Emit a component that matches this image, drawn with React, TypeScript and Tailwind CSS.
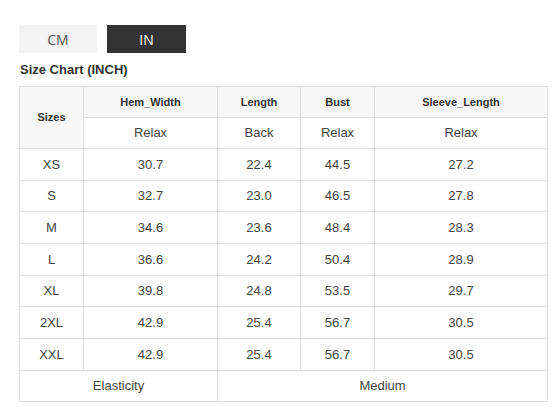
const ROWS = [
  ["XS", "30.7", "22.4", "44.5", "27.2"],
  ["S", "32.7", "23.0", "46.5", "27.8"],
  ["M", "34.6", "23.6", "48.4", "28.3"],
  ["L", "36.6", "24.2", "50.4", "28.9"],
  ["XL", "39.8", "24.8", "53.5", "29.7"],
  ["2XL", "42.9", "25.4", "56.7", "30.5"],
  ["XXL", "42.9", "25.4", "56.7", "30.5"],
];

const cell = "border border-[#dddddd] text-center align-middle p-0";

export default function App() {
  return (
    <div className="w-[555px] h-[418px] bg-white pl-[19px] pt-[25px] font-['Liberation_Sans',Arial,sans-serif]">
      {/* Unit tabs */}
      <div className="flex gap-[10px] font-['Open_Sans',sans-serif] text-[14px]">
        <button className="w-[78px] h-[28px] bg-[#f3f3f3] text-[#555]">CM</button>
        <button className="w-[79px] h-[28px] bg-[#333333] text-white">IN</button>
      </div>

      <h2 className="mt-[9px] mb-[8px] pl-px text-[13px] leading-[16px] font-bold text-[#333]">
        Size Chart (INCH)
      </h2>

      <table className="border-collapse table-fixed w-[529px] text-[#444]">
        <colgroup>
          <col className="w-[64px]" />
          <col className="w-[134px]" />
          <col className="w-[83px]" />
          <col className="w-[74px]" />
          <col className="w-[173px]" />
        </colgroup>
        <tbody>
          <tr className="h-[31px] text-[11px] font-bold text-[#333]">
            <td rowSpan={2} className={`${cell} bg-[#f7f7f7]`}>Sizes</td>
            <td className={`${cell} bg-[#f7f7f7]`}>Hem_Width</td>
            <td className={`${cell} bg-[#f7f7f7]`}>Length</td>
            <td className={`${cell} bg-[#f7f7f7]`}>Bust</td>
            <td className={`${cell} bg-[#f7f7f7]`}>Sleeve_Length</td>
          </tr>
          <tr className="h-[31px] text-[13px]">
            <td className={cell}>Relax</td>
            <td className={cell}>Back</td>
            <td className={cell}>Relax</td>
            <td className={cell}>Relax</td>
          </tr>
          {ROWS.map((r) => (
            <tr key={r[0]} className="h-[31.7px] text-[13px]">
              {r.map((v, i) => (
                <td key={i} className={cell}>{v}</td>
              ))}
            </tr>
          ))}
          <tr className="h-[31px] text-[13px]">
            <td colSpan={2} className={cell}>Elasticity</td>
            <td colSpan={3} className={cell}>Medium</td>
          </tr>
        </tbody>
      </table>
    </div>
  );
}
